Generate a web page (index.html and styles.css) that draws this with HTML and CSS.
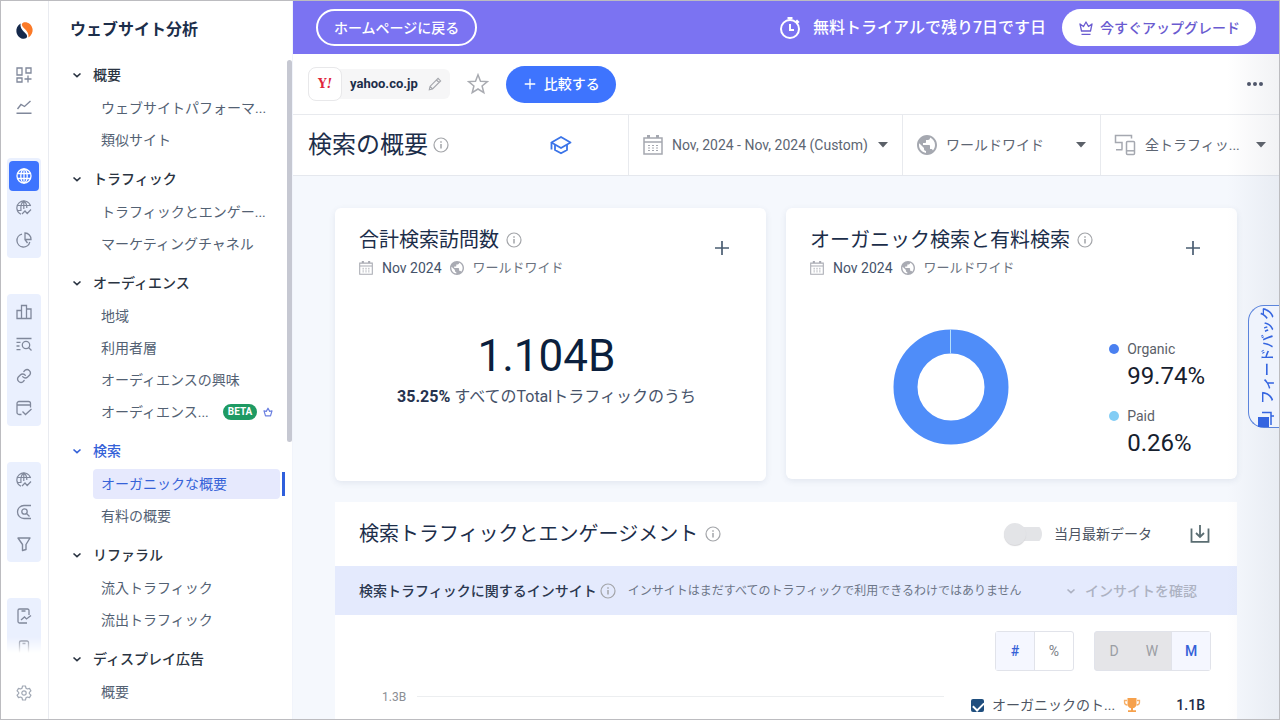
FILE: index.html
```html
<!DOCTYPE html>
<html lang="ja">
<head>
<meta charset="utf-8">
<meta name="viewport" content="width=device-width, initial-scale=1">
<title>検索の概要 - yahoo.co.jp</title>
<link rel="stylesheet" href="styles.css">
</head>
<body>
<svg class="sprite" aria-hidden="true">
  <symbol id="i-info" viewBox="0 0 16 16"><circle cx="8" cy="8" r="7" fill="none" stroke="currentColor" stroke-width="1.2"/><path d="M8 7v4.6M8 4.3v1.5" stroke="currentColor" stroke-width="1.5"/></symbol>
  <symbol id="i-chev" viewBox="0 0 10 10"><path d="M1.5 3.5 5 6.7l3.500-3.200" fill="none" stroke="currentColor" stroke-width="1.600"/></symbol>
  <symbol id="i-caret" viewBox="0 0 10 6"><path d="M0 0h10L5 5.500z" fill="currentColor"/></symbol>
  <symbol id="i-plus" viewBox="0 0 16 16"><path d="M8 1v14M1 8h14" stroke="currentColor" stroke-width="1.700"/></symbol>
  <symbol id="i-cal" viewBox="0 0 20 20"><path d="M1 3h18v16H1zM1 7h18" fill="none" stroke="currentColor" stroke-width="1.500"/><path d="M4 1.500h3M13 1.500h3" stroke="currentColor" stroke-width="3"/><path d="M5 10.500h2M9 10.500h2M13 10.500h2M5 13h2M9 13h2M13 13h2M5 15.500h2M9 15.500h2M13 15.500h2" stroke="currentColor" stroke-width="1.200"/></symbol>
  <symbol id="i-earth" viewBox="2 2 20 20"><path fill="currentColor" d="M12 2C6.480 2 2 6.480 2 12s4.480 10 10 10 10-4.480 10-10S17.520 2 12 2zm-1 17.930c-3.950-.490-7-3.850-7-7.930 0-.620.080-1.210.210-1.790L9 15v1c0 1.100.900 2 2 2v1.930zm6.900-2.540c-.260-.810-1-1.390-1.900-1.390h-1v-3c0-.550-.450-1-1-1H8v-2h2c.550 0 1-.450 1-1V7h2c1.100 0 2-.900 2-2v-.410c2.930 1.190 5 4.060 5 7.410 0 2.080-.800 3.970-2.100 5.390z"/></symbol>
  <symbol id="i-globe" viewBox="0 0 16 16"><g fill="none" stroke="currentColor" stroke-width="1.300"><circle cx="8" cy="8" r="7"/><ellipse cx="8" cy="8" rx="3.200" ry="7"/><path d="M1.500 5.500h13M1.500 10.500h13M8 1v14"/></g></symbol>
  <symbol id="i-globe-trend" viewBox="0 0 16 16"><g fill="none" stroke="currentColor" stroke-width="1.200"><path d="M14.600 6A7 7 0 1 0 5 14.300"/><path d="M5 10.500C4.500 6.500 5.500 2.500 7.800 1M10.800 8C10.900 5 10 2.500 7.800 1M1.500 5.500h12.800M1.500 10.500h4M7.800 1v8"/><path d="m6 14 3-3 2.200 2.500L15 9.500"/></g></symbol>
  <symbol id="i-pie" viewBox="0 0 16 16"><g fill="none" stroke="currentColor" stroke-width="1.300"><path d="M6 2.200A6.500 6.500 0 1 0 13.800 10"/><path d="M9 1a6.200 6.200 0 0 1 6 6.500H9zM9 7.500l2.500 3.500"/></g></symbol>
  <symbol id="i-dash" viewBox="0 0 16 16"><g fill="none" stroke="currentColor" stroke-width="1.300"><path d="M1 1h5v7H1zM10 1h5v5h-5zM1 11h5v4H1zM12 8.500v7M8.500 12h7"/></g></symbol>
  <symbol id="i-trend" viewBox="0 0 16 16"><g fill="none" stroke="currentColor" stroke-width="1.400"><path d="m1.500 10 3.500-4.500 3.500 2L14.500 2M0.500 14.300h15"/></g></symbol>
  <symbol id="i-bars" viewBox="0 0 16 16"><path d="M1 6.500h4.500v8H1zM5.500 1.500h5v13h-5zM10.500 5h4.500v9.500h-4.500z" fill="none" stroke="currentColor" stroke-width="1.300"/></symbol>
  <symbol id="i-list" viewBox="0 0 16 16"><g fill="none" stroke="currentColor" stroke-width="1.300"><path d="M.500 2.500h15M.500 6.300h4M.500 10h3M.500 13.700h4"/><circle cx="10" cy="9" r="3.700"/><path d="m12.500 11.500 3 3"/></g></symbol>
  <symbol id="i-link" viewBox="0 0 24 24"><g fill="none" stroke="currentColor" stroke-width="2" stroke-linecap="round"><path d="M10 13a5 5 0 0 0 7.500.500l3-3a5 5 0 0 0-7-7l-1.700 1.700"/><path d="M14 11a5 5 0 0 0-7.500-.500l-3 3a5 5 0 0 0 7 7l1.700-1.700"/></g></symbol>
  <symbol id="i-wincheck" viewBox="0 0 16 16"><g fill="none" stroke="currentColor" stroke-width="1.300"><path d="M5.500 14.500H3a2 2 0 0 1-2-2V3.500a2 2 0 0 1 2-2h9.500a2 2 0 0 1 2 2v4M1 5h13.500M6.500 11.500l3 3 6-5.500"/></g></symbol>
  <symbol id="i-csearch" viewBox="0 0 16 16"><g fill="none" stroke="currentColor" stroke-width="1.300"><path d="M15 1.500H8a6.500 6.500 0 0 0 0 13h7"/><circle cx="8.500" cy="7.500" r="2.700"/><path d="m10.500 9.500 3 3"/></g></symbol>
  <symbol id="i-funnel" viewBox="0 0 16 16"><path d="M2 2h12L10 8.500v5l-3.500 1v-6z" fill="none" stroke="currentColor" stroke-width="1.400" stroke-linejoin="round"/></symbol>
  <symbol id="i-doc" viewBox="0 0 16 16"><g fill="none" stroke="currentColor" stroke-width="1.300"><path d="M13 7V2.500A1.500 1.500 0 0 0 11.500 1h-8A1.500 1.500 0 0 0 2 2.500v11A1.500 1.500 0 0 0 3.500 15H11M5.500 3h4M5 12l3.500-3 2 2L15 7.500"/></g></symbol>
  <symbol id="i-phone" viewBox="0 0 16 16"><path d="M3.500 16V2.500A1.500 1.500 0 0 1 5 1h6a1.500 1.500 0 0 1 1.500 1.500V16M6.500 3.500h3" fill="none" stroke="currentColor" stroke-width="1.300"/></symbol>
  <symbol id="i-gear" viewBox="0 0 24 24"><g fill="none" stroke="currentColor" stroke-width="1.800" stroke-linejoin="round"><circle cx="12" cy="12" r="3.300"/><path d="M9.800 1.500h4.400l.7 3.200 2.200 1.300 3.100-1 2.200 3.800L20 11v2l2.400 2.200-2.200 3.800-3.100-1-2.200 1.300-.7 3.200H9.800l-.7-3.200L6.900 18l-3.100 1-2.200-3.800L4 13v-2L1.600 8.800 3.800 5l3.100 1 2.200-1.300z"/></g></symbol>
  <symbol id="i-crown" viewBox="0 0 16 16"><g fill="none" stroke="currentColor" stroke-width="1.300" stroke-linejoin="round"><path d="m3.500 11-1.500-7 3.500 2.500L8 2l2.500 4.500L14 4l-1.500 7zM3.500 14.300h9"/></g></symbol>
  <symbol id="i-crown-mini" viewBox="0 0 10 10"><path d="M2.500 8.800 1 3.800l2.300.6L5 1.200l1.700 3.200L9 3.800 7.500 8.800z" fill="none" stroke="currentColor" stroke-width="1.200" stroke-linejoin="round"/></symbol>
</svg>

<div class="app">
  <nav class="rail" aria-label="メイン">
    <a class="logo" href="#" aria-label="Similarweb">
      <svg viewBox="0 0 16 16" width="17" height="17"><path fill="#15294b" d="M4.300 1.500C1.200 3.200 0 6.500.400 9.300 1 13.300 4.200 15.800 7.500 15.800c3 0 3.800-2.400 2-4.400C7.400 9.100 3.600 6.500 4.300 1.500z"/><path fill="#fb7a28" d="M11.700 14.500c3.100-1.700 4.300-5 3.900-7.800C15 2.700 11.800.200 8.500.200c-3 0-3.800 2.400-2 4.400 2.100 2.300 5.900 4.900 5.200 9.900z"/></svg>
    </a>
    <div class="rail-scroll">
      <div class="rail-group rail-plain">
        <a href="#" aria-label="ダッシュボード"><svg><use href="#i-dash"/></svg></a>
        <a href="#" aria-label="トレンド"><svg><use href="#i-trend"/></svg></a>
      </div>
      <div class="rail-group">
        <a class="on" href="#" aria-label="ウェブサイト"><svg><use href="#i-globe"/></svg></a>
        <a href="#" aria-label="ウェブ分析"><svg><use href="#i-globe-trend"/></svg></a>
        <a href="#" aria-label="市場"><svg><use href="#i-pie"/></svg></a>
      </div>
      <div class="rail-group">
        <a href="#" aria-label="比較"><svg><use href="#i-bars"/></svg></a>
        <a href="#" aria-label="キーワード"><svg><use href="#i-list"/></svg></a>
        <a href="#" aria-label="リンク"><svg><use href="#i-link"/></svg></a>
        <a href="#" aria-label="ページ"><svg><use href="#i-wincheck"/></svg></a>
      </div>
      <div class="rail-group">
        <a href="#" aria-label="業界"><svg><use href="#i-globe-trend"/></svg></a>
        <a href="#" aria-label="検索"><svg><use href="#i-csearch"/></svg></a>
        <a href="#" aria-label="ファネル"><svg><use href="#i-funnel"/></svg></a>
      </div>
      <div class="rail-group">
        <a href="#" aria-label="アプリ分析"><svg><use href="#i-doc"/></svg></a>
        <a href="#" aria-label="アプリ"><svg><use href="#i-phone"/></svg></a>
      </div>
    </div>
    <a class="rail-gear" href="#" aria-label="設定"><svg><use href="#i-gear"/></svg></a>
  </nav>

  <aside class="side">
    <div class="side-main">
      <h2 class="side-title">ウェブサイト分析</h2>
      <section class="sec">
        <button class="sec-head" type="button"><svg><use href="#i-chev"/></svg>概要</button>
        <a class="item" href="#">ウェブサイトパフォーマ...</a>
        <a class="item" href="#">類似サイト</a>
      </section>
      <section class="sec">
        <button class="sec-head" type="button"><svg><use href="#i-chev"/></svg>トラフィック</button>
        <a class="item" href="#">トラフィックとエンゲー...</a>
        <a class="item" href="#">マーケティングチャネル</a>
      </section>
      <section class="sec">
        <button class="sec-head" type="button"><svg><use href="#i-chev"/></svg>オーディエンス</button>
        <a class="item" href="#">地域</a>
        <a class="item" href="#">利用者層</a>
        <a class="item" href="#">オーディエンスの興味</a>
        <a class="item" href="#">オーディエンス...<span class="beta">BETA</span><svg class="item-crown"><use href="#i-crown-mini"/></svg></a>
      </section>
      <section class="sec">
        <button class="sec-head open" type="button"><svg><use href="#i-chev"/></svg>検索</button>
        <a class="item current" href="#">オーガニックな概要</a>
        <a class="item" href="#">有料の概要</a>
      </section>
      <section class="sec">
        <button class="sec-head" type="button"><svg><use href="#i-chev"/></svg>リファラル</button>
        <a class="item" href="#">流入トラフィック</a>
        <a class="item" href="#">流出トラフィック</a>
      </section>
      <section class="sec">
        <button class="sec-head" type="button"><svg><use href="#i-chev"/></svg>ディスプレイ広告</button>
        <a class="item" href="#">概要</a>
      </section>
    </div>
    <div class="side-bar"><div class="thumb"></div></div>
  </aside>

  <main class="main">
    <div class="trial">
      <a class="pill pill-line" href="#">ホームページに戻る</a>
      <div class="trial-right">
        <svg class="timer" viewBox="0 0 22 22"><circle cx="11" cy="12" r="9" fill="none" stroke="#fff" stroke-width="2"/><path d="M8.500 1.200h5" stroke="#fff" stroke-width="2.400"/><path d="m17 3.500 2.500 2.500" stroke="#fff" stroke-width="3"/><path d="M11 7v6h4" fill="none" stroke="#fff" stroke-width="2"/></svg>
        <span class="trial-text">無料トライアルで残り7日です日</span>
        <button class="pill pill-white" type="button"><svg><use href="#i-crown"/></svg>今すぐアップグレード</button>
      </div>
    </div>

    <div class="body">
      <div class="site">
        <div class="chip">
          <span class="fav">Y<i>!</i></span>
          <span class="domain">yahoo.co.jp</span>
          <button class="plain" type="button" aria-label="編集"><svg class="s14" viewBox="0 0 16 16"><path d="m1.500 14.500.8-3.700L11.500 1.600l2.900 2.900-9.200 9.200zM9.700 3.400l2.900 2.900M2.300 10.800l2.900 2.900" fill="none" stroke="#a5a7ad" stroke-width="1.300"/></svg></button>
        </div>
        <button class="plain star" type="button" aria-label="お気に入り"><svg viewBox="0 0 22 22" width="22" height="22"><path d="m11 1.800 2.500 6.400 6.900.4-5.300 4.400 1.700 6.700L11 16l-5.800 3.700L6.900 13 1.600 8.600l6.900-.4z" fill="none" stroke="#a9abb1" stroke-width="1.500"/></svg></button>
        <button class="pill pill-blue" type="button"><svg><use href="#i-plus"/></svg>比較する</button>
        <button class="plain more" type="button" aria-label="その他"><svg viewBox="0 0 16 4" width="16" height="4" fill="#4d5468"><circle cx="2" cy="2" r="2"/><circle cx="8" cy="2" r="2"/><circle cx="14" cy="2" r="2"/></svg></button>
      </div>

      <header class="head">
        <div class="head-title">
          <h1>検索の概要</h1>
          <svg class="info"><use href="#i-info"/></svg>
          <a class="learn" href="#" aria-label="学習"><svg viewBox="0 0 22 20" width="22" height="20" fill="none" stroke="#3b74e8" stroke-width="1.800" stroke-linejoin="round"><path d="M11 2 20.500 7.500 11 13 1.500 7.500z"/><path d="M5 10v5l6 3.300 6-3.300v-5M1.500 7.500v7"/></svg></a>
        </div>
        <label class="filter f-date"><svg class="s20"><use href="#i-cal"/></svg><select aria-label="期間"><option>Nov, 2024 - Nov, 2024 (Custom)</option></select><svg class="caret"><use href="#i-caret"/></svg></label>
        <label class="filter f-geo"><svg class="s20"><use href="#i-earth"/></svg><select aria-label="地域"><option>ワールドワイド</option></select><svg class="caret"><use href="#i-caret"/></svg></label>
        <label class="filter f-dev"><svg class="s22" viewBox="0 0 22 22" fill="none" stroke="currentColor" stroke-width="1.500"><path d="M17.500 4.500V1.500H1.500v7H8v7M2 15.800h6.500"/><rect x="12.500" y="7.500" width="8" height="13" rx="1"/><path d="M12.500 16.800h8"/></svg><select aria-label="トラフィック"><option>全トラフィッ...</option></select><svg class="caret"><use href="#i-caret"/></svg></label>
      </header>

      <div class="content">
        <div class="row">
          <section class="card visits">
            <div class="card-top">
              <div>
                <h3>合計検索訪問数<svg class="info"><use href="#i-info"/></svg></h3>
                <p class="meta"><svg class="s14"><use href="#i-cal"/></svg><span class="when">Nov 2024</span><svg class="s14"><use href="#i-earth"/></svg><span>ワールドワイド</span></p>
              </div>
              <button class="plain add" type="button" aria-label="追加"><svg><use href="#i-plus"/></svg></button>
            </div>
            <p class="big">1.104B</p>
            <p class="share"><b>35.25%</b> すべてのTotalトラフィックのうち</p>
          </section>

          <section class="card split">
            <div class="card-top">
              <div>
                <h3>オーガニック検索と有料検索<svg class="info"><use href="#i-info"/></svg></h3>
                <p class="meta"><svg class="s14"><use href="#i-cal"/></svg><span class="when">Nov 2024</span><svg class="s14"><use href="#i-earth"/></svg><span>ワールドワイド</span></p>
              </div>
              <button class="plain add" type="button" aria-label="追加"><svg><use href="#i-plus"/></svg></button>
            </div>
            <div class="split-body">
              <div class="donut"><svg viewBox="0 0 116 116" width="116" height="116"><circle cx="58" cy="58" r="45.500" fill="none" stroke="#4f8df9" stroke-width="24"/><path d="M57.500.500v24" stroke="#b5e0fb" stroke-width="1"/></svg></div>
              <dl class="legend">
                <div><dt class="organic">Organic</dt><dd>99.74%</dd></div>
                <div><dt class="paid">Paid</dt><dd>0.26%</dd></div>
              </dl>
            </div>
          </section>
        </div>

        <section class="panel">
          <div class="panel-head">
            <h3>検索トラフィックとエンゲージメント<svg class="info"><use href="#i-info"/></svg></h3>
            <label class="switch"><input type="checkbox" role="switch">当月最新データ</label>
            <button class="plain down" type="button" aria-label="ダウンロード"><svg viewBox="0 0 20 20" width="20" height="20" fill="none" stroke="#5a6d72" stroke-width="1.800"><path d="M1.500 4.500v13.300h17V4.500M10 1v11.500M6 9l4 4 4-4"/></svg></button>
          </div>
          <div class="insight">
            <strong>検索トラフィックに関するインサイト</strong>
            <svg class="info"><use href="#i-info"/></svg>
            <span class="note">インサイトはまだすべてのトラフィックで利用できるわけではありません</span>
            <button class="plain show" type="button" disabled><svg><use href="#i-chev"/></svg>インサイトを確認</button>
          </div>
          <div class="controls">
            <div class="seg seg-unit"><button class="on" type="button">#</button><button type="button">%</button></div>
            <div class="seg seg-time"><button type="button" disabled>D</button><button type="button" disabled>W</button><button class="on" type="button">M</button></div>
          </div>
          <div class="chart">
            <div class="axis"><span>1.3B</span><i></i></div>
            <label class="series">
              <input type="checkbox" checked>
              <span class="series-name">オーガニックのト...</span>
              <svg class="trophy" viewBox="0 0 18 16"><path fill="#f6a14c" d="M4.500 1h9v6a4.500 4.500 0 0 1-3.500 4.300v2h3V15H5v-1.700h3v-2A4.500 4.500 0 0 1 4.500 7z"/><path d="M4 3.500H1.500v1.800C1.500 7 2.700 8 4.500 8M14 3.500h2.500v1.800c0 1.700-1.200 2.700-3 2.700" fill="none" stroke="#f6b06a" stroke-width="1.300"/></svg>
              <span class="series-val">1.1B</span>
            </label>
          </div>
        </section>
      </div>

      <div class="shade"></div>
      <button class="feedback" type="button"><svg viewBox="0 0 16 16" width="16" height="16"><path fill="#3565e0" d="M5 0h11v10H5z"/><path d="M3 2v12.500h9M0 11h3" fill="none" stroke="#3565e0" stroke-width="1.500"/></svg>フィードバック</button>
    </div>
  </main>
</div>
</body>
</html>
```
FILE: styles.css
```css
* { box-sizing: border-box; }
body {
  margin: 0;
  height: 100vh;
  overflow: hidden;
  border: 1px solid #bcbcc0;
  background: #fff;
  color: #1c2e4a;
  font-family: Roboto, "Noto Sans CJK JP", sans-serif;
  font-size: 14px;
  line-height: 20px;
}
h1, h2, h3, p, dl, dd { margin: 0; font-weight: 400; }
a { color: inherit; text-decoration: none; }
button, select, input { font: inherit; color: inherit; margin: 0; }
button { border: 0; background: none; padding: 0; cursor: pointer; }
svg { flex: none; display: block; }
.sprite { position: absolute; width: 0; height: 0; }
.plain { display: flex; align-items: center; justify-content: center; }
.s14 { width: 14px; height: 14px; }
.s20 { width: 20px; height: 20px; }
.s22 { width: 22px; height: 22px; }
.info { width: 16px; height: 16px; color: #a3a5a9; }

.app { display: flex; height: 100%; }

/* icon rail */
.rail { width: 48px; flex: none; display: flex; flex-direction: column; align-items: center; padding-right: 1px; border-right: 1px solid #e9ebf0; }
.logo { height: 58px; display: flex; align-items: center; }
.rail-scroll {
  flex: 1;
  min-height: 0;
  overflow: hidden;
  -webkit-mask-image: linear-gradient(#000 calc(100% - 16px), transparent);
  mask-image: linear-gradient(#000 calc(100% - 16px), transparent);
}
.rail-group { display: flex; flex-direction: column; gap: 2px; width: 34px; padding: 3px 2px; margin-bottom: 36px; border-radius: 4px; background: #eaf0fe; }
.rail-plain { padding: 1px 2px; margin-bottom: 35px; background: none; }
.rail-group a { display: flex; align-items: center; justify-content: center; height: 30px; border-radius: 4px; color: #80889b; }
.rail-group svg { width: 16px; height: 16px; }
.rail-group .on { background: #3e74fe; color: #fff; }
.rail-gear { height: 66px; padding-top: 32px; color: #a2a9b5; }
.rail-gear svg { width: 16px; height: 16px; }

/* sidebar */
.side { width: 244px; flex: none; display: flex; overflow: hidden; border-right: 1px solid #f1f4fb; }
.side-main { flex: 1; min-width: 0; }
.side-title { height: 57px; padding-left: 21px; font-size: 16px; line-height: 57px; font-weight: 700; }
.sec { display: flex; flex-direction: column; padding-bottom: 6px; }
.sec-head { display: flex; align-items: center; gap: 11px; width: 100%; height: 34px; padding-left: 23px; font-weight: 500; color: #2a3442; }
.sec-head svg { width: 10px; height: 10px; }
.sec-head.open { color: #3562d8; }
.item { display: flex; align-items: center; height: 30px; margin: 1px 7px 1px 44px; padding-left: 8px; border-radius: 4px; color: #536173; white-space: nowrap; }
.item.current { background: #e6e9fd; color: #3562d8; position: relative; }
.item.current::after { content: ""; position: absolute; right: -5px; top: 3px; width: 3px; height: 24px; background: #2f5fdc; }
.beta { margin-left: 14px; padding: 0 5px; border-radius: 8px; background: #1e9a63; color: #fff; font-size: 10px; line-height: 16px; font-weight: 700; }
.item-crown { width: 10px; height: 10px; margin-left: 6px; color: #6a7fe0; }
.side-bar { width: 5px; margin-top: 59px; }
.thumb { height: 58%; border-radius: 3px; background: #c6c8d2; }

/* main */
.main { flex: 1; min-width: 0; display: flex; flex-direction: column; }
.trial { flex: none; height: 53px; display: flex; align-items: center; justify-content: space-between; padding: 0 23px; background: #7b73f2; color: #fff; }
.trial-right { display: flex; align-items: center; }
.timer { width: 22px; height: 22px; margin-right: 12px; }
.trial-text { margin-right: 16px; font-size: 16px; font-weight: 500; }
.pill { display: flex; align-items: center; height: 37px; border-radius: 19px; font-weight: 500; white-space: nowrap; }
.pill-line { padding: 0 16px; border: 2px solid #fff; }
.pill-white { gap: 6px; padding: 0 16px; background: #fff; color: #6a5bd0; }
.pill-white svg { width: 16px; height: 16px; }
.pill-blue { gap: 8px; padding: 0 16px 0 18px; background: #3e74fe; color: #fff; }
.pill-blue svg { width: 12px; height: 12px; }

.body { flex: 1; min-height: 0; position: relative; overflow: hidden; background: #f5f8fd; }
.site { display: flex; align-items: center; height: 61px; padding: 0 16px 0 15px; background: #fff; border-bottom: 1px solid #e8eaee; }
.chip { display: flex; align-items: center; height: 30px; padding-right: 8px; border-radius: 6px; background: #f6f6f7; }
.fav { display: flex; align-items: center; justify-content: center; width: 34px; height: 34px; margin-right: 8px; border: 1px solid #e8e8ea; border-radius: 8px; background: #fff; color: #e0263c; font-family: "DejaVu Serif", serif; font-size: 12px; font-weight: 700; }
.domain { margin-right: 10px; font-size: 13px; font-weight: 700; }
.star { margin: 0 17px; }
.more { margin-left: auto; height: 24px; }

.head { display: flex; height: 61px; background: #fff; border-bottom: 1px solid #e5e8ee; color: #5d6673; }
.head-title { flex: 1; display: flex; align-items: center; padding: 0 56px 0 15px; }
.head-title h1 { color: #1c2e4a; font-size: 24px; line-height: 36px; white-space: nowrap; }
.head-title .info { margin-left: 5px; }
.learn { margin-left: auto; }
.filter { display: flex; align-items: center; padding: 0 14px; border-left: 1px solid #e8eaee; }
.filter select { flex: 1; min-width: 0; margin-left: 9px; padding: 0; border: 0; background: none; appearance: none; }
.filter > svg:first-child { color: #a5a8b0; }
.caret { width: 10px; height: 6px; color: #5b6068; }
.f-date { flex: 0 0 274px; }
.f-geo { flex: 0 0 198px; }
.f-dev { flex: 0 0 179px; padding: 0 13px; }

.content { padding: 32px 42px 0; }
.row { display: grid; grid-template-columns: 431fr 451fr; gap: 20px; align-items: start; margin-bottom: 21px; }
.card { padding: 18px 32px 0 24px; border-radius: 6px; background: #fff; box-shadow: 0 2px 6px rgba(60, 80, 120, 0.100); }
.card-top { display: flex; justify-content: space-between; align-items: flex-start; }
h3 { display: flex; align-items: center; gap: 7px; font-size: 20px; line-height: 28px; white-space: nowrap; }
.meta { display: flex; align-items: center; margin-top: 4px; color: #6a7280; font-size: 13px; white-space: nowrap; }
.meta svg { color: #a9abb3; margin-right: 9px; }
.when { margin-right: 8px; font-size: 14px; color: #45536a; }
.add { width: 24px; height: 24px; margin-top: 10px; color: #4a5d72; }
.add svg { width: 16px; height: 16px; }
.visits { padding-bottom: 72px; }
.big { margin-top: 52px; color: #0b1f3d; font-size: 44px; line-height: 52px; text-align: center; }
.share { margin-top: 3px; font-size: 16px; line-height: 24px; text-align: center; color: #47536a; }
.share b { color: #26324e; }
.split { padding-bottom: 21px; }
.split-body { display: flex; align-items: flex-start; margin-top: 51px; }
.donut { flex: 1; display: flex; justify-content: center; margin-right: 18px; }
.legend { display: grid; gap: 13px; padding-top: 8px; }
.legend dt { display: flex; align-items: center; gap: 8px; line-height: 24px; color: #5b6068; }
.legend dt::before { content: ""; width: 10px; height: 10px; border-radius: 50%; background: #4a80f0; }
.legend .paid::before { background: #83cdf5; }
.legend dd { padding-left: 18px; color: #16202e; font-size: 24px; line-height: 30px; }

.panel { background: #fff; }
.panel-head { display: flex; align-items: center; height: 64px; padding: 0 25px 0 24px; }
.switch { display: flex; align-items: center; gap: 12px; margin-left: auto; color: #4d5563; }
.switch input { appearance: none; display: flex; align-items: center; width: 38px; height: 22px; background: linear-gradient(#e3e4e7, #e3e4e7) right center / 30px 14px no-repeat; border-radius: 11px; }
.switch input::before { content: ""; width: 22px; height: 22px; border-radius: 50%; background: #e3e4e7; box-shadow: 0 1px 1px #d5d5d8; }
.down { width: 24px; height: 24px; margin-left: 36px; }
.insight { display: flex; align-items: center; height: 49px; padding: 0 40px 0 24px; background: #e4eafd; }
.insight strong { margin-right: 3px; font-weight: 500; white-space: nowrap; color: #2b3850; }
.note { margin-left: 12px; font-size: 12px; color: #6d7688; white-space: nowrap; }
.show { gap: 9px; margin-left: auto; color: #adb2c2; font-weight: 500; white-space: nowrap; }
.show svg { width: 10px; height: 10px; }
.controls { display: flex; justify-content: flex-end; gap: 20px; padding: 16px 26px 0; }
.seg { display: flex; height: 40px; border: 1px solid #e1e3ea; border-radius: 3px; color: #7a7e86; }
.seg-unit { width: 79px; }
.seg-time { width: 117px; background: #e5e5e8; }
.seg button { flex: 1; }
.seg button + button { border-left: 1px solid #e1e3ea; }
.seg .on { background: #f5f7ff; color: #3562d8; font-weight: 500; }
.seg-time button[disabled] { color: #9b9ea4; border: 0; }
.chart { display: flex; gap: 27px; padding: 16px 26px 120px 47px; }
.axis { flex: 1; display: flex; align-items: flex-start; gap: 11px; font-size: 12px; color: #8b8e94; }
.axis i { flex: 1; height: 1px; margin-top: 9px; background: #eceef0; }
.series { display: flex; align-items: center; width: 240px; height: 24px; margin-top: 6px; }
.series input { appearance: none; width: 13px; height: 13px; margin-right: 8px; border-radius: 2px; background: #1f4e7e; position: relative; }
.series input::after { content: ""; position: absolute; left: 4px; top: 1px; width: 5px; height: 9px; border: solid #fff; border-width: 0 2px 2px 0; transform: rotate(45deg); }
.series-name { white-space: nowrap; color: #4d5563; }
.trophy { width: 18px; height: 16px; margin-left: 8px; }
.series-val { margin-left: auto; padding-right: 6px; font-weight: 500; }

/* floating elements at the window edge */
.shade { position: absolute; top: 0; right: 0; bottom: 0; width: 52px; pointer-events: none; background: linear-gradient(to right, rgba(120, 130, 155, 0), rgba(120, 130, 155, 0.100)); }
.feedback {
  position: absolute;
  top: 251px;
  right: -1px;
  display: flex;
  align-items: center;
  gap: 7px;
  width: 32px;
  height: 123px;
  padding-right: 4px;
  border: 1px solid #5b84dc;
  border-left: 0;
  border-radius: 0 16px 16px 0;
  background: #eff3fc;
  color: #3565e0;
  font-weight: 500;
  writing-mode: vertical-rl;
  text-orientation: sideways;
  transform: rotate(180deg);
}
```
